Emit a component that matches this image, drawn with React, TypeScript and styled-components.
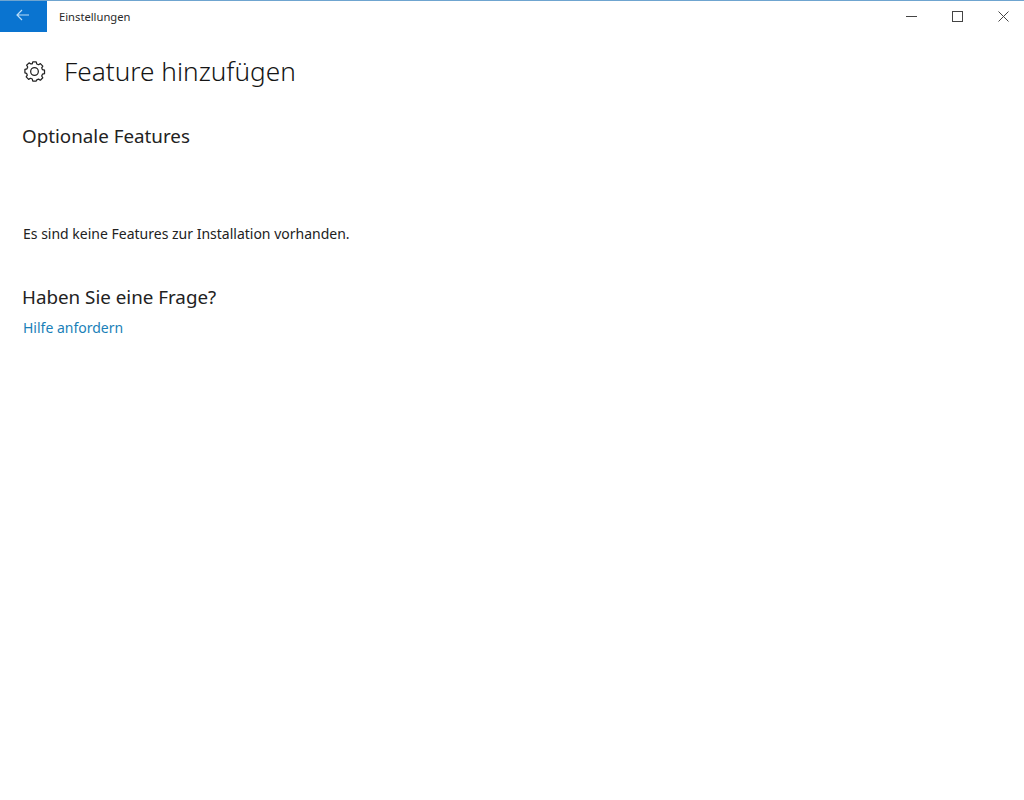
import { createGlobalStyle } from 'styled-components';
import styled from 'styled-components';

const GlobalStyle = createGlobalStyle`
  html, body {
    margin: 0;
    padding: 0;
    background: #fff;
  }

  body {
    font-family: 'Noto Sans', 'Open Sans', sans-serif;
    color: #1a1a1a;
  }
`;

const Page = styled.div`
  width: 1024px;
  height: 800px;
  overflow: hidden;
  background: #fff;
  border-top: 1px solid #6fa5d0;
  box-sizing: border-box;
`;

const TitleBar = styled.header`
  display: flex;
  align-items: center;
  height: 31px;
`;

const BackButton = styled.button`
  display: flex;
  align-items: center;
  justify-content: center;
  width: 47px;
  height: 31px;
  padding: 0 2px 3px 0;
  border: 0;
  background: #0a74d0;
`;

const AppName = styled.span`
  flex: 1;
  margin-left: 12px;
  font-size: 11.2px;
  color: #2a2a2a;
`;

const WindowButton = styled.button`
  display: flex;
  align-items: center;
  justify-content: center;
  box-sizing: border-box;
  width: 46px;
  height: 31px;
  padding: 0 0 0 4px;
  border: 0;
  background: transparent;
`;

const Content = styled.main`
  display: flex;
  flex-direction: column;
  align-items: flex-start;
  padding-left: 22px;
`;

const PageHeader = styled.div`
  display: flex;
  align-items: center;
  gap: 18px;
  margin: 21px 0 0 1px;
  height: 36px;
`;

const PageTitle = styled.h1`
  margin: 0;
  font-size: 26.2px;
  font-weight: 300;
  line-height: 36px;
  color: #151515;
`;

const SectionTitle = styled.h2<{ $top: number }>`
  margin: ${(p) => p.$top}px 0 0;
  font-size: 18.8px;
  font-weight: 400;
  line-height: 26px;
  color: #222;
`;

const Message = styled.p`
  margin: 75px 0 0 1px;
  font-size: 14px;
  line-height: 20px;
  color: #222;
`;

const HelpLink = styled.a`
  margin: 8px 0 0 1px;
  font-size: 14px;
  line-height: 20px;
  color: #1a7fb8;
  text-decoration: none;
`;

export default function App() {
  return (
    <>
      <GlobalStyle />
      <Page>
        <TitleBar>
          <BackButton aria-label="Zurück">
            <svg width="14" height="12" viewBox="0 0 14 12" fill="none" stroke="#b9ddf8" strokeWidth="1.2">
              <path d="M13 6H1.2M6 1 1 6l5 5" />
            </svg>
          </BackButton>
          <AppName>Einstellungen</AppName>
          <WindowButton aria-label="Minimieren">
            <svg width="11" height="11" viewBox="0 0 11 11" fill="none" stroke="#444" strokeWidth="1">
              <path d="M0 5.5h11" />
            </svg>
          </WindowButton>
          <WindowButton aria-label="Maximieren">
            <svg width="11" height="11" viewBox="0 0 11 11" fill="none" stroke="#444" strokeWidth="1">
              <rect x="0.5" y="0.5" width="10" height="10" />
            </svg>
          </WindowButton>
          <WindowButton aria-label="Schließen">
            <svg width="11" height="11" viewBox="0 0 11 11" fill="none" stroke="#444" strokeWidth="1">
              <path d="M0.5 0.5l10 10M10.5 0.5l-10 10" />
            </svg>
          </WindowButton>
        </TitleBar>
        <Content>
          <PageHeader>
            <svg width="23" height="23" viewBox="0 0 24 24" fill="none" stroke="#222" strokeWidth="1.3" strokeLinejoin="round">
              <path d="M9.67 4.14 10.2 2h3.6l.53 2.14 1.9.79 1.89-1.14 2.54 2.55-1.14 1.88.79 1.9 2.14.53v3.6l-2.14.53-.79 1.9 1.14 1.89-2.54 2.54-1.89-1.14-1.9.79L13.8 22h-3.6l-.53-2.14-1.9-.79-1.89 1.14-2.54-2.54 1.14-1.89-.79-1.9L2 13.35v-3.6l2.14-.53.79-1.9-1.14-1.88L6.33 3l1.89 1.14z" />
              <circle cx="12" cy="12" r="4" />
            </svg>
            <PageTitle>Feature hinzufügen</PageTitle>
          </PageHeader>
          <SectionTitle $top={34}>Optionale Features</SectionTitle>
          <Message>Es sind keine Features zur Installation vorhanden.</Message>
          <SectionTitle $top={40}>Haben Sie eine Frage?</SectionTitle>
          <HelpLink href="#">Hilfe anfordern</HelpLink>
        </Content>
      </Page>
    </>
  );
}
